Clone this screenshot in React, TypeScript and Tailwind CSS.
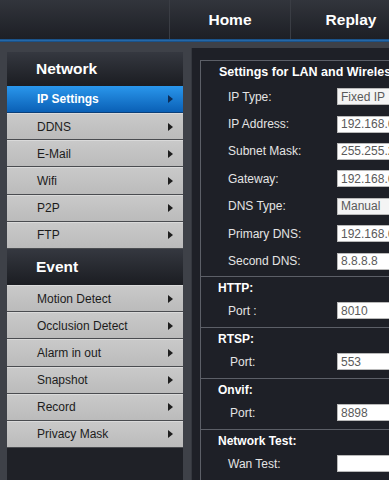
const networkItems = ["IP Settings", "DDNS", "E-Mail", "Wifi", "P2P", "FTP"];
const eventItems = ["Motion Detect", "Occlusion Detect", "Alarm in out", "Snapshot", "Record", "Privacy Mask"];

const lanRows = [
  { label: "IP Type:", value: "Fixed IP", select: true },
  { label: "IP Address:", value: "192.168.6.100" },
  { label: "Subnet Mask:", value: "255.255.255.0" },
  { label: "Gateway:", value: "192.168.6.1" },
  { label: "DNS Type:", value: "Manual", select: true },
  { label: "Primary DNS:", value: "192.168.6.1" },
  { label: "Second DNS:", value: "8.8.8.8" },
];

const sections = [
  { title: "HTTP:", label: "Port :", value: "8010" },
  { title: "RTSP:", label: "Port:", value: "553", indent: true },
  { title: "Onvif:", label: "Port:", value: "8898", indent: true },
  { title: "Network Test:", label: "Wan Test:", value: "" },
];

function Arrow({ active }: { active?: boolean }) {
  return (
    <svg width="5" height="8" viewBox="0 0 5 8" className="shrink-0">
      <path d="M0 0 L5 4 L0 8 Z" fill={active ? "#0c2d57" : "#1e1e1e"} />
    </svg>
  );
}

function MenuItem({ label, active }: { label: string; active?: boolean }) {
  return (
    <div
      className={
        active
          ? "h-[27px] flex items-center justify-between pl-[30px] pr-[10px] bg-linear-to-b from-[#2a97ec] to-[#0a60b6] border-b border-[#0b3f78] text-white font-bold text-[12px]"
          : "h-[27.2px] flex items-center justify-between pl-[30px] pr-[10px] bg-linear-to-b from-[#c9c9c9] to-[#bbbbbb] border-t border-[#dadada] border-b border-b-[#4a4c50] text-[#1c1c1c] text-[12px]"
      }
    >
      <span>{label}</span>
      <Arrow active={active} />
    </div>
  );
}

function GroupHeader({ label, h }: { label: string; h: string }) {
  return (
    <div className={`${h} flex items-center pl-[29px] bg-linear-to-b from-[#353840] to-[#1b1d22] text-white font-bold text-[15.5px]`}>
      {label}
    </div>
  );
}

function Field({ value, select }: { value: string; select?: boolean }) {
  return (
    <div
      className={`h-[17px] w-[110px] shrink-0 flex items-center pl-[3px] border border-[#b9b9b9] text-[12px] text-[#5a5a5a] whitespace-nowrap overflow-hidden ${
        select ? "bg-[#f4f4f4]" : "bg-white"
      }`}
    >
      {value}
    </div>
  );
}

export default function App() {
  return (
    <div
      className="w-[389px] h-[480px] overflow-hidden bg-[#3e4148] flex flex-col"
      style={{ fontFamily: '"Liberation Sans", Arial, sans-serif' }}
    >
      {/* top nav */}
      <div className="h-[39px] shrink-0 flex bg-linear-to-b from-[#32353c] to-[#1d1f25]">
        <div className="w-[169px] shrink-0" />
        <div className="w-px bg-[#121317]" />
        <div className="w-[121px] shrink-0 flex items-center justify-center text-white font-bold text-[15.5px] border-l border-[#3a3d44]">
          Home
        </div>
        <div className="w-px bg-[#121317]" />
        <div className="w-[121px] shrink-0 flex items-center justify-center text-white font-bold text-[15.5px] border-l border-[#3a3d44]">
          Replay
        </div>
      </div>
      <div className="h-[3px] shrink-0 bg-linear-to-b from-[#17487a] via-[#2468a8] to-[#17487a]" />

      <div className="flex-1 flex min-h-0">
        {/* sidebar */}
        <div className="w-[176px] shrink-0 ml-[7px] mt-[10px] bg-[#1f2127] flex flex-col">
          <GroupHeader label="Network" h="h-[34px]" />
          {networkItems.map((item, i) => (
            <MenuItem key={item} label={item} active={i === 0} />
          ))}
          <GroupHeader label="Event" h="h-[36px]" />
          {eventItems.map((item) => (
            <MenuItem key={item} label={item} />
          ))}
        </div>

        {/* content */}
        <div className="w-[260px] shrink-0 ml-[8px] mt-[6px] bg-[#1e2027] border-l border-[#34373e] pt-[12px] pl-[8px]">
          <div className="border-t border-l border-[#5c5f67] h-full">
            <div className="h-[22px] flex items-center pl-[18px] text-white font-bold text-[12.5px] whitespace-nowrap">
              Settings for LAN and Wireless
            </div>
            <div className="pb-[1px]">
              {lanRows.map((r) => (
                <div key={r.label} className="h-[27.4px] flex items-center pl-[27px]">
                  <span className="w-[109px] shrink-0 text-[12px] text-[#e4e4e4]">{r.label}</span>
                  <Field value={r.value} select={r.select} />
                </div>
              ))}
            </div>
            {sections.map((s) => (
              <div key={s.title} className="border-t border-[#5c5f67] pb-[5px]">
                <div className="h-[23px] flex items-center pl-[17px] text-white font-bold text-[12px]">{s.title}</div>
                <div className="h-[22px] flex items-center">
                  <span className={`w-[136px] shrink-0 text-[12px] text-[#e4e4e4] ${s.indent ? "pl-[29px]" : "pl-[27px]"}`}>
                    {s.label}
                  </span>
                  <Field value={s.value} />
                </div>
              </div>
            ))}
          </div>
        </div>
      </div>
    </div>
  );
}
